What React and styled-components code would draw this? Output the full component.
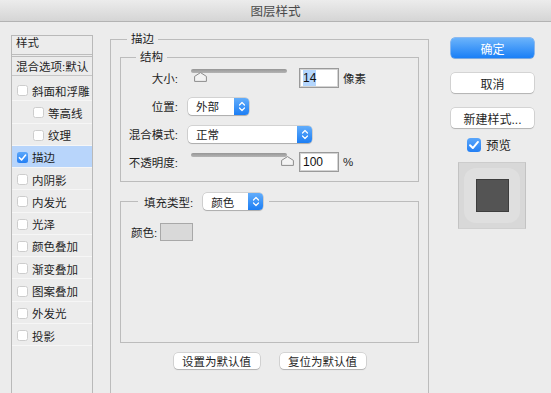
import styled, { createGlobalStyle } from 'styled-components';

const GlobalStyle = createGlobalStyle`
  html, body { margin: 0; padding: 0; }
  body {
    background: #ececec;
    font-family: "Liberation Sans", "Noto Sans CJK SC", sans-serif;
    font-size: 11.5px;
    color: #1f1f1f;
  }
`;

const effects = [
    { name: '斜面和浮雕' },
    { name: '等高线', indent: true },
    { name: '纹理', indent: true },
    { name: '描边', checked: true, active: true },
    { name: '内阴影' },
    { name: '内发光' },
    { name: '光泽' },
    { name: '颜色叠加' },
    { name: '渐变叠加' },
    { name: '图案叠加' },
    { name: '外发光' },
    { name: '投影' },
];

function Check({ checked, size = 11 }) {
    return (
        <CheckBox $checked={checked} $size={size}>
            {checked && (
                <svg width={size} height={size} viewBox="0 0 12 12">
                    <path d="M2.6 6.2 L5 8.6 L9.4 3.4" fill="none" stroke="#fff" strokeWidth="1.7" strokeLinecap="round" strokeLinejoin="round" />
                </svg>
            )}
        </CheckBox>
    );
}

function Stepper() {
    return (
        <StepBtn>
            <svg width="8" height="11" viewBox="0 0 8 11">
                <path d="M1.5 4 L4 1.5 L6.5 4 M1.5 7 L4 9.5 L6.5 7" fill="none" stroke="#fff" strokeWidth="1.2" strokeLinecap="round" strokeLinejoin="round" />
            </svg>
        </StepBtn>
    );
}

function Select({ value, width }) {
    return (
        <SelectBox $width={width}>
            <span>{value}</span>
            <Stepper />
        </SelectBox>
    );
}

function Slider({ pct }) {
    return (
        <SliderWrap>
            <Track />
            <Thumb style={{ left: 3 + pct * 96 - 6.5 }} width="13" height="10" viewBox="0 0 13 10">
                <path d="M6.5 0.6 L12.4 4.4 V9.4 H0.6 V4.4 Z" fill="#f3f3f3" stroke="#8b8b8b" strokeWidth="1" strokeLinejoin="round" />
            </Thumb>
        </SliderWrap>
    );
}

function App() {
    return (
        <>
            <GlobalStyle />
            <Window>
                <TitleBar>图层样式</TitleBar>
                <Body>
                    <Sidebar>
                        <SideHeader>样式</SideHeader>
                        <BlendRow>混合选项:默认</BlendRow>
                        <EffectList>
                            {effects.map((e) => (
                                <EffectRow key={e.name} $indent={e.indent} $active={e.active}>
                                    <Check checked={e.checked} />
                                    <span>{e.name}</span>
                                </EffectRow>
                            ))}
                        </EffectList>
                    </Sidebar>

                    <Main>
                        <Group>
                            <Legend $ml={7} $pad={4}>描边</Legend>
                            <InnerGroup>
                                <Legend $ml={15} $pad={4}>结构</Legend>
                                <FieldRow>
                                    <Label>大小:</Label>
                                    <Slider pct={0.1} />
                                    <NumInput><Sel>14</Sel></NumInput>
                                    <Unit>像素</Unit>
                                </FieldRow>
                                <FieldRow>
                                    <Label>位置:</Label>
                                    <Select value="外部" width={61} />
                                </FieldRow>
                                <FieldRow>
                                    <Label>混合模式:</Label>
                                    <Select value="正常" width={124} />
                                </FieldRow>
                                <FieldRow>
                                    <Label>不透明度:</Label>
                                    <Slider pct={1} />
                                    <NumInput>100</NumInput>
                                    <Unit>%</Unit>
                                </FieldRow>
                            </InnerGroup>

                            <FillGroup>
                                <FillLegend>
                                    <span>填充类型:</span>
                                    <Select value="颜色" width={60} />
                                </FillLegend>
                                <FillBody>
                                    <ColorRow>
                                        <span>颜色:</span>
                                        <Swatch />
                                    </ColorRow>
                                </FillBody>
                            </FillGroup>

                            <ButtonRow>
                                <SmallButton>设置为默认值</SmallButton>
                                <SmallButton>复位为默认值</SmallButton>
                            </ButtonRow>
                        </Group>
                    </Main>

                    <Side>
                        <Button $primary>确定</Button>
                        <Button>取消</Button>
                        <Button>新建样式...</Button>
                        <PreviewToggle>
                            <Check checked size={14} />
                            <span>预览</span>
                        </PreviewToggle>
                        <Preview>
                            <PreviewInner>
                                <PreviewSwatch />
                            </PreviewInner>
                        </Preview>
                    </Side>
                </Body>
            </Window>
        </>
    );
}

const Window = styled.div`
    width: 551px;
    height: 393px;
    overflow: hidden;
    display: flex;
    flex-direction: column;
`;

const TitleBar = styled.div`
    height: 21px;
    flex-shrink: 0;
    border-bottom: 1px solid #b3b3b3;
    background: linear-gradient(#ececec, #d5d5d5);
    display: flex;
    align-items: center;
    justify-content: center;
    font-size: 12.5px;
    color: #4a4a4a;
`;

const Body = styled.div`
    flex: 1;
    min-height: 0;
    display: flex;
    align-items: flex-start;
`;

const Sidebar = styled.div`
    align-self: stretch;
    margin: 13px 0 0 11px;
    width: 80px;
    border: 1px solid #b9b9b9;
    border-bottom: none;
    display: flex;
    flex-direction: column;
`;

const SideHeader = styled.div`
    height: 21px;
    box-sizing: border-box;
    padding: 0 0 0 4px;
    line-height: 14px;
    border-bottom: 3px double #bdbdbd;
`;

const BlendRow = styled.div`
    height: 18px;
    display: flex;
    align-items: center;
    padding-left: 4px;
    border-bottom: 1px solid #c6c6c6;
    white-space: nowrap;
`;

const EffectList = styled.div`
    padding-top: 3px;
`;

const EffectRow = styled.div`
    height: 22.27px;
    box-sizing: border-box;
    display: flex;
    align-items: center;
    gap: 4px;
    padding: 2px 0 0 ${({ $indent }) => ($indent ? 21 : 5)}px;
    border-bottom: 1px solid #f6f6f6;
    background: ${({ $active }) => ($active ? '#b8d5fb' : 'transparent')};
`;

const CheckBox = styled.span`
    width: ${({ $size }) => $size}px;
    height: ${({ $size }) => $size}px;
    box-sizing: border-box;
    flex-shrink: 0;
    border-radius: ${({ $size }) => ($size > 12 ? 3.5 : 2.5)}px;
    background: ${({ $checked }) => ($checked ? 'linear-gradient(#5aa6fb, #237ff4)' : '#fff')};
    border: ${({ $checked }) => ($checked ? 'none' : '1px solid #cdcdcd')};
    display: flex;
    align-items: center;
    justify-content: center;
`;

const Main = styled.div`
    width: 319px;
    margin: 10px 0 0 17px;
`;

const Group = styled.fieldset`
    margin: 0;
    padding: 0 9px 40px 9px;
    min-width: 0;
    border: 1px solid #bcbcbc;
`;

const Legend = styled.legend`
    margin-left: ${({ $ml }) => $ml}px;
    padding: 0 ${({ $pad }) => $pad}px;
    line-height: 14px;
`;

const InnerGroup = styled.fieldset`
    margin: 4px 0 0;
    padding: 0 0 5px;
    min-width: 0;
    border: 1px solid #bcbcbc;
`;

const FieldRow = styled.div`
    height: 28px;
    display: flex;
    align-items: center;
`;

const Label = styled.span`
    width: 57px;
    margin-right: 10px;
    text-align: right;
    white-space: nowrap;
`;

const SliderWrap = styled.div`
    position: relative;
    align-self: stretch;
    width: 111px;
    padding-top: 5px;
    box-sizing: border-box;
`;

const Track = styled.div`
    margin-left: 3px;
    width: 96px;
    height: 4px;
    border-radius: 2px;
    background: linear-gradient(#969696, #b4b4b4);
`;

const Thumb = styled.svg`
    position: absolute;
    top: 8px;
`;

const NumInput = styled.div`
    width: 40px;
    height: 20px;
    box-sizing: border-box;
    border: 1px solid #9a9a9a;
    box-shadow: inset 0 0 0 1px #d4d4d4;
    background: #fff;
    display: flex;
    align-items: center;
    padding-left: 3px;
    font-size: 12px;
    color: #111;
`;

const Sel = styled.span`
    background: #b4d6fd;
    padding: 1px 0;
`;

const Unit = styled.span`
    margin-left: 4px;
    font-size: 11.5px;
`;

const SelectBox = styled.div`
    width: ${({ $width }) => $width}px;
    height: 17px;
    box-sizing: border-box;
    border-radius: 4px;
    background: #fff;
    box-shadow: 0 0 0 0.5px rgba(0, 0, 0, 0.22), 0 1px 1px rgba(0, 0, 0, 0.18);
    display: flex;
    align-items: center;
    justify-content: space-between;
    padding-left: 8px;
    overflow: hidden;
`;

const StepBtn = styled.span`
    width: 15px;
    height: 17px;
    background: linear-gradient(#62adfb, #1c7ef4);
    display: flex;
    align-items: center;
    justify-content: center;
`;

const FillGroup = styled.fieldset`
    margin: 11px 0 0;
    padding: 0;
    min-width: 0;
    border: 1px solid #bcbcbc;
`;

const FillLegend = styled.legend`
    margin-left: 17px;
    padding: 0 6px;
    display: flex;
    align-items: center;
    gap: 10px;
    height: 17px;
`;

const FillBody = styled.div`
    height: 132px;
    box-sizing: border-box;
    padding: 13px 0 0 10px;
`;

const ColorRow = styled.div`
    display: flex;
    align-items: center;
    gap: 3px;
`;

const Swatch = styled.div`
    width: 33px;
    height: 18px;
    box-sizing: border-box;
    border: 1px solid #a8a8a8;
    background: #d9d9d9;
`;

const ButtonRow = styled.div`
    display: flex;
    justify-content: center;
    gap: 20px;
    margin-top: 10px;
`;

const SmallButton = styled.div`
    width: 86px;
    height: 16px;
    border-radius: 4px;
    background: #fff;
    box-shadow: 0 0 0 0.5px rgba(0, 0, 0, 0.2), 0 1px 1px rgba(0, 0, 0, 0.16);
    display: flex;
    align-items: center;
    justify-content: center;
`;

const Side = styled.div`
    width: 83px;
    margin: 16px 0 0 22px;
    display: flex;
    flex-direction: column;
    gap: 15px;
`;

const Button = styled.div`
    height: 20px;
    border-radius: 4px;
    display: flex;
    align-items: center;
    justify-content: center;
    font-size: 12px;
    color: ${({ $primary }) => ($primary ? '#fff' : '#1f1f1f')};
    background: ${({ $primary }) => ($primary ? 'linear-gradient(#6bb3fb, #1a7ff6)' : '#fff')};
    box-shadow: ${({ $primary }) =>
        $primary
            ? '0 0 0 0.5px #2b86f3, 0 1px 1px rgba(0, 0, 0, 0.15)'
            : '0 0 0 0.5px rgba(0, 0, 0, 0.2), 0 1px 1px rgba(0, 0, 0, 0.16)'};
`;

const PreviewToggle = styled.div`
    margin-top: -8px;
    padding-left: 16px;
    display: flex;
    align-items: center;
    gap: 5px;
    font-size: 12.5px;
`;

const Preview = styled.div`
    margin: -7px 0 0 7px;
    width: 68px;
    height: 67px;
    box-sizing: border-box;
    background: #d8d8d8;
    border: 1px solid #c3c3c3;
    border-top-color: #cccccc;
    border-bottom-color: #d0d0d0;
    padding: 5px;
`;

const PreviewInner = styled.div`
    height: 100%;
    border-radius: 12px;
    background: #dfdfdf;
    display: flex;
    align-items: center;
    justify-content: center;
`;

const PreviewSwatch = styled.div`
    width: 33px;
    height: 33px;
    box-sizing: border-box;
    border: 1px solid #3d3d3d;
    background: #545454;
`;

export default App;
